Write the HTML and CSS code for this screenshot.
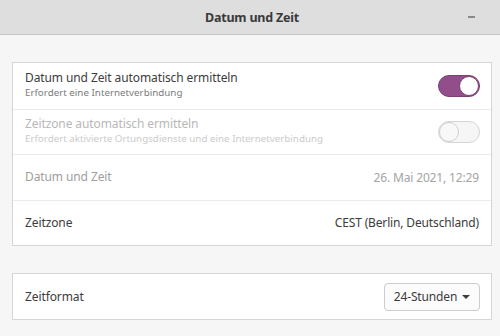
FILE: index.html
```html
<!DOCTYPE html>
<html lang="de">
<head>
<meta charset="utf-8">
<title>Datum und Zeit</title>
<link rel="stylesheet" href="styles.css">
</head>
<body>
<header class="titlebar">
  <span class="title">Datum und Zeit</span>
  <span class="minimize"></span>
</header>
<main class="content">
  <section class="card">
    <div class="row">
      <div class="labels">
        <div class="label">Datum und Zeit automatisch ermitteln</div>
        <div class="sub">Erfordert eine Internetverbindung</div>
      </div>
      <span class="switch on"><span class="knob"></span></span>
    </div>
    <div class="row disabled">
      <div class="labels">
        <div class="label">Zeitzone automatisch ermitteln</div>
        <div class="sub">Erfordert aktivierte Ortungsdienste und eine Internetverbindung</div>
      </div>
      <span class="switch off"><span class="knob"></span></span>
    </div>
    <div class="row dim">
      <div class="label">Datum und Zeit</div>
      <div class="value">26. Mai 2021, 12:29</div>
    </div>
    <div class="row">
      <div class="label">Zeitzone</div>
      <div class="value">CEST (Berlin, Deutschland)</div>
    </div>
  </section>
  <section class="card">
    <div class="row">
      <div class="label">Zeitformat</div>
      <button class="dropdown">24-Stunden <span class="caret"></span></button>
    </div>
  </section>
</main>
</body>
</html>
```
FILE: styles.css
```css
* { box-sizing: border-box; }
html, body { margin: 0; padding: 0; }
body {
  width: 500px;
  height: 336px;
  overflow: hidden;
  background: #f6f6f6;
  font-family: "Noto Sans", "Open Sans", sans-serif;
  color: #3c3c3c;
}
.titlebar {
  height: 35px;
  background: #dedede;
  border-bottom: 1px solid #c6c6c6;
  display: flex;
  align-items: center;
  justify-content: center;
  position: relative;
}
.title {
  font-weight: bold;
  font-size: 12.5px;
  color: #3a3a3a;
  letter-spacing: -0.2px;
  padding-left: 4px;
}
.minimize {
  position: absolute;
  right: 25px;
  top: 16px;
  width: 7px;
  height: 2px;
  background: #8a8a8a;
}
.content {
  padding: 27px 8px 0 12px;
  display: flex;
  flex-direction: column;
  gap: 27px;
}
.card {
  background: #fff;
  border: 1px solid #d6d6d6;
}
.row {
  height: 45.5px;
  display: flex;
  align-items: center;
  justify-content: space-between;
  padding: 0 11px 0 12px;
}
.card .row:only-child { height: 45px; }
.row + .row { border-top: 1px solid #ebebeb; }
.labels {
  display: flex;
  flex-direction: column;
  margin-top: -1px;
}
.label {
  font-size: 12px;
  letter-spacing: -0.1px;
  line-height: 16px;
}
.sub {
  font-size: 9.8px;
  line-height: 14px;
  color: #7c7c7c;
  letter-spacing: 0;
}
.disabled .label { color: #b8b8b8; }
.disabled .sub { color: #cbcbcb; }
.dim .label { color: #9e9e9e; }
.dim .value { color: #a4a4a4; }
.value {
  font-size: 12px;
  letter-spacing: -0.15px;
  padding-right: 1px;
}
.switch {
  width: 42px;
  height: 22px;
  border-radius: 11px;
  display: flex;
  align-items: center;
  padding: 0 1px;
}
.switch.on {
  background: #924d8b;
  border: 1px solid #7a3f74;
  justify-content: flex-end;
}
.switch.off {
  background: #f6f6f6;
  border: 1px solid #d5d5d5;
  justify-content: flex-start;
}
.knob {
  width: 20px;
  height: 20px;
  border-radius: 50%;
  background: #fff;
  border: 1px solid #d0d0d0;
}
.switch.on .knob { border-color: #7a3f74; margin-right: -1px; }
.switch.off .knob { margin-left: -1px; background: #f8f8f8; }
.dropdown {
  width: 96px;
  height: 28px;
  border: 1px solid #cdcdcd;
  border-radius: 4px;
  background: #fbfbfb;
  font-family: inherit;
  font-size: 12px;
  letter-spacing: -0.15px;
  color: #3c3c3c;
  display: flex;
  align-items: center;
  justify-content: center;
  gap: 5px;
  padding: 0;
}
.caret {
  width: 0;
  height: 0;
  border-left: 4px solid transparent;
  border-right: 4px solid transparent;
  border-top: 4px solid #3c3c3c;
}
```
